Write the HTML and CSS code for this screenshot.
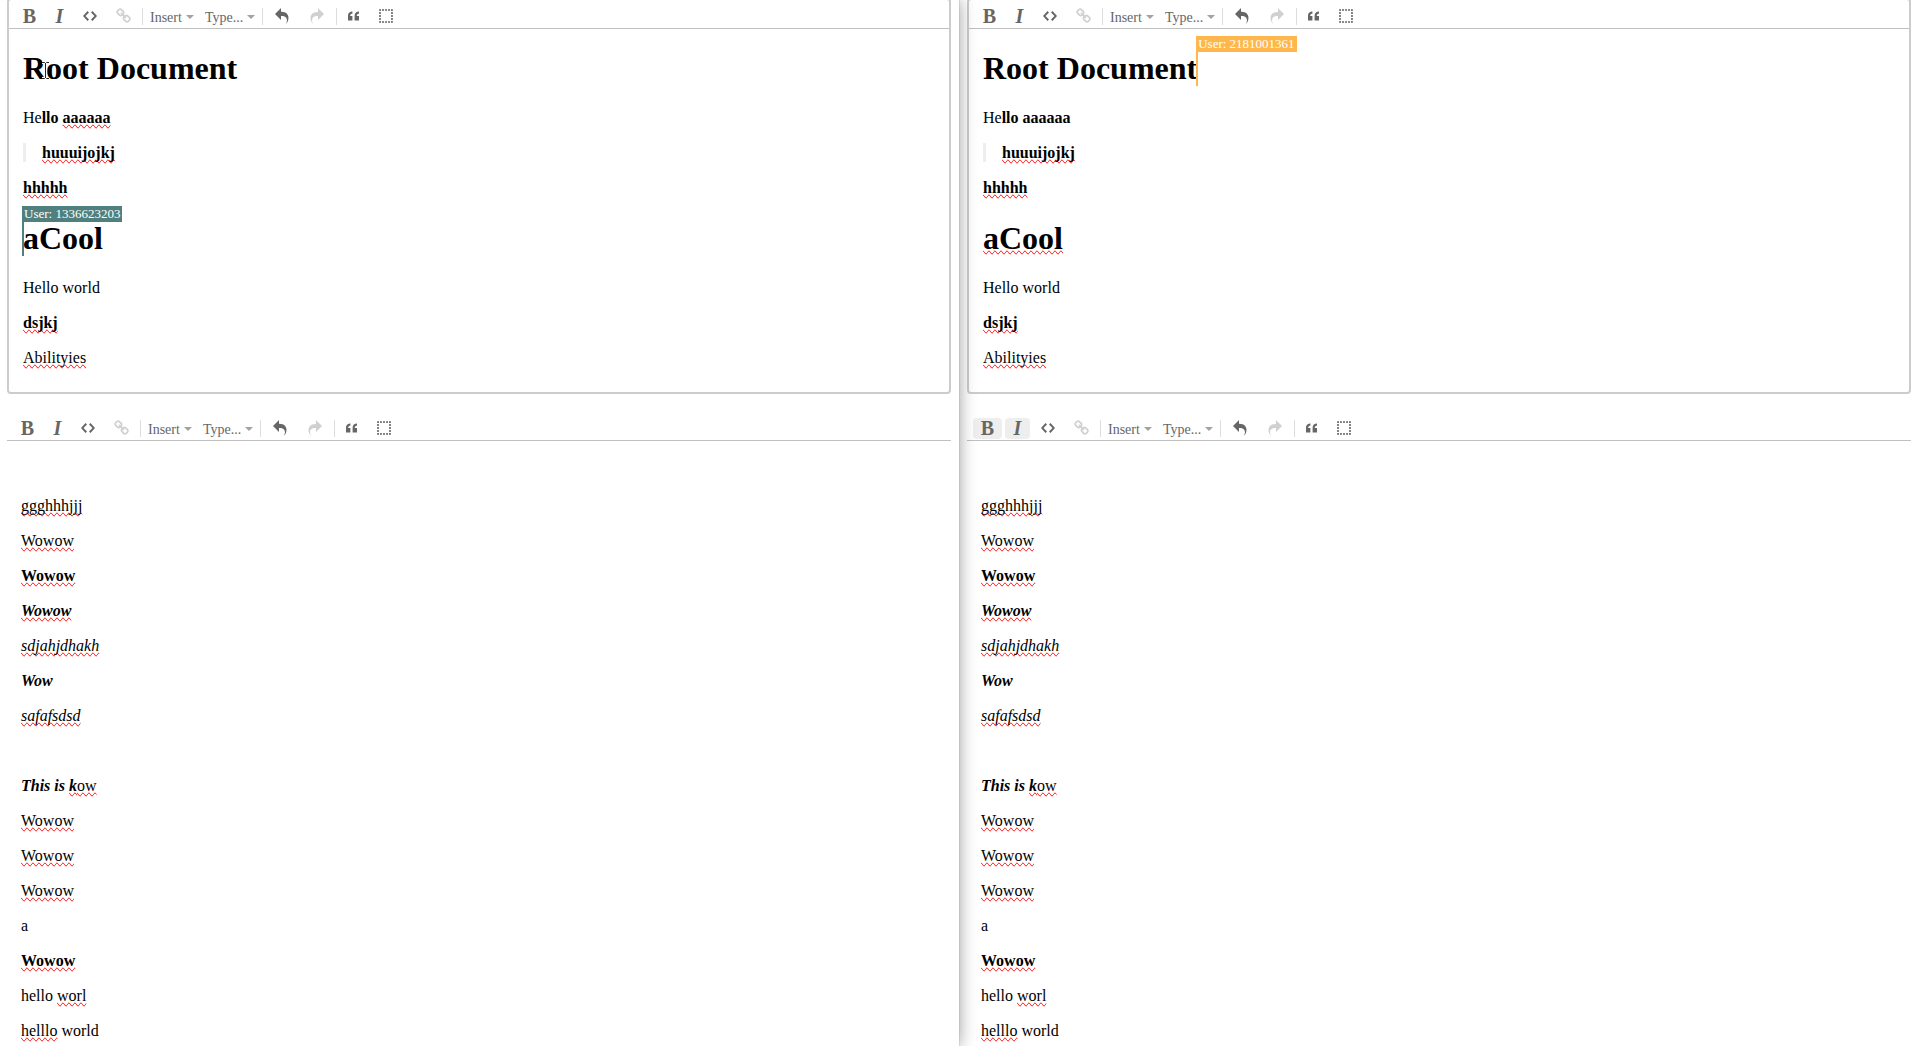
FILE: index.html
```html
<!DOCTYPE html>
<html lang="en">
<head>
<meta charset="utf-8">
<title>Collaborative editor</title>
<link rel="stylesheet" href="styles.css">
</head>
<body>
<svg class="sprite" aria-hidden="true">
  <symbol id="code" viewBox="0 0 896 1024"><path d="M608 192l-96 96 224 224-224 224 96 96 288-320-288-320zM288 192l-288 320 288 320 96-96-224-224 224-224-96-96z"/></symbol>
  <symbol id="link" viewBox="0 0 951 1024"><path d="M832 694q0-22-16-38l-118-118q-16-16-38-16-24 0-41 18 1 1 10 10t12 12 8 10 7 14 2 15q0 22-16 38t-38 16q-8 0-15-2t-14-7-10-8-12-12-10-10q-18 17-18 41 0 22 16 38l117 118q15 15 38 15 22 0 38-14l84-83q16-16 16-38zM430 292q0-22-16-38l-117-118q-16-16-38-16-22 0-38 15l-84 83q-16 16-16 37 0 22 16 38l118 118q15 15 38 15 24 0 41-17-1-1-10-10t-12-12-8-10-7-14-2-15q0-22 16-38t38-16q8 0 15 2t14 7 10 8 12 12 10 10q18-17 18-41zM941 694q0 68-48 116l-84 83q-47 47-116 47-69 0-116-48l-117-118q-47-47-47-116 0-70 50-119l-50-50q-49 50-118 50-68 0-116-48l-118-118q-48-48-48-116t48-116l84-83q47-47 116-47 69 0 116 48l117 118q47 47 47 116 0 70-50 119l50 50q49-50 118-50 68 0 116 48l118 118q48 48 48 116z"/></symbol>
  <symbol id="undo" viewBox="0 0 1024 1024"><path d="M761 1024c113-206 132-520-313-509v253l-384-384 384-384v248c534-13 594 472 313 775z"/></symbol>
  <symbol id="redo" viewBox="0 0 1024 1024"><path d="M576 248v-248l384 384-384 384v-253c-446-10-427 303-313 509-280-303-221-789 313-775z"/></symbol>
  <symbol id="quote" viewBox="0 0 640 896"><path d="M0 448v256h256v-256h-128c0 0 0-128 128-128v-128c0 0-256 0-256 256zM640 320v-128c0 0-256 0-256 256v256h256v-256h-128c0 0 0-128 128-128z"/></symbol>
  <symbol id="parent" viewBox="0 0 15 16"><rect x="2" y="2" width="12" height="12" fill="none" stroke="currentColor" stroke-width="1.600" stroke-dasharray="2 1" stroke-dashoffset="1"/></symbol>
</svg>

<main class="panes">
  <section class="pane pane-left">
    <div class="editor editor-framed">
      <div class="menubar" role="toolbar">
        <button class="item strong" title="Toggle strong style">B</button>
        <button class="item em" title="Toggle emphasis">I</button>
        <button class="item" title="Toggle code font"><svg width="14" height="16"><use href="#code"/></svg></button>
        <button class="item" title="Add or remove link" disabled><svg width="15" height="16"><use href="#link"/></svg></button>
        <span class="separator"></span>
        <button class="dropdown" aria-haspopup="menu">Insert</button>
        <button class="dropdown" aria-haspopup="menu">Type...</button>
        <span class="separator"></span>
        <button class="item" title="Undo last change"><svg width="16" height="16"><use href="#undo"/></svg></button>
        <button class="item" title="Redo last undone change" disabled><svg width="16" height="16"><use href="#redo"/></svg></button>
        <span class="separator"></span>
        <button class="item" title="Wrap in block quote"><svg width="11" height="16"><use href="#quote"/></svg></button>
        <button class="item" title="Select parent node"><svg width="15" height="16"><use href="#parent"/></svg></button>
      </div>
      <div class="doc" contenteditable="true" spellcheck="false">
        <h1>Root Document<svg class="ibeam" width="9" height="19" viewBox="0 0 9 19" aria-hidden="true"><path class="halo" d="M1 1.500h2.500l1 1 1-1H8M4.500 2v15M1 17.500h2.500l1-1 1 1H8"/><path class="beam" d="M1 1.500h2.500l1 1 1-1H8M4.500 2v15M1 17.500h2.500l1-1 1 1H8"/></svg></h1>
        <p>He<strong>llo <span class="typo">aaaaaa</span></strong></p>
        <blockquote><p><strong class="typo">huuuijojkj</strong></p></blockquote>
        <p><strong class="typo">hhhhh</strong></p>
        <h1><span class="caret caret-teal"><span class="user">User: 1336623203</span></span>aCool</h1>
        <p>Hello world</p>
        <p><strong class="typo">dsjkj</strong></p>
        <p><span class="typo">Abilityies</span></p>
      </div>
    </div>

    <div class="editor">
      <div class="menubar" role="toolbar">
        <button class="item strong" title="Toggle strong style">B</button>
        <button class="item em" title="Toggle emphasis">I</button>
        <button class="item" title="Toggle code font"><svg width="14" height="16"><use href="#code"/></svg></button>
        <button class="item" title="Add or remove link" disabled><svg width="15" height="16"><use href="#link"/></svg></button>
        <span class="separator"></span>
        <button class="dropdown" aria-haspopup="menu">Insert</button>
        <button class="dropdown" aria-haspopup="menu">Type...</button>
        <span class="separator"></span>
        <button class="item" title="Undo last change"><svg width="16" height="16"><use href="#undo"/></svg></button>
        <button class="item" title="Redo last undone change" disabled><svg width="16" height="16"><use href="#redo"/></svg></button>
        <span class="separator"></span>
        <button class="item" title="Wrap in block quote"><svg width="11" height="16"><use href="#quote"/></svg></button>
        <button class="item" title="Select parent node"><svg width="15" height="16"><use href="#parent"/></svg></button>
      </div>
      <div class="doc" contenteditable="true" spellcheck="false">
        <p><br></p>
        <p><span class="typo">ggghhhjjj</span></p>
        <p><span class="typo">Wowow</span></p>
        <p><strong class="typo">Wowow</strong></p>
        <p><em><strong class="typo">Wowow</strong></em></p>
        <p><em class="typo">sdjahjdhakh</em></p>
        <p><em><strong>Wow</strong></em></p>
        <p><em class="typo">safafsdsd</em></p>
        <p><br></p>
        <p><em><strong>This is <span class="typo">k</span></strong></em><span class="typo">ow</span></p>
        <p><span class="typo">Wowow</span></p>
        <p><span class="typo">Wowow</span></p>
        <p><span class="typo">Wowow</span></p>
        <p>a</p>
        <p><strong class="typo">Wowow</strong></p>
        <p>hello <span class="typo">worl</span></p>
        <p><span class="typo">helllo</span> world</p>
      </div>
    </div>
  </section>

  <section class="pane pane-right">
    <div class="editor editor-framed">
      <div class="menubar" role="toolbar">
        <button class="item strong" title="Toggle strong style">B</button>
        <button class="item em" title="Toggle emphasis">I</button>
        <button class="item" title="Toggle code font"><svg width="14" height="16"><use href="#code"/></svg></button>
        <button class="item" title="Add or remove link" disabled><svg width="15" height="16"><use href="#link"/></svg></button>
        <span class="separator"></span>
        <button class="dropdown" aria-haspopup="menu">Insert</button>
        <button class="dropdown" aria-haspopup="menu">Type...</button>
        <span class="separator"></span>
        <button class="item" title="Undo last change"><svg width="16" height="16"><use href="#undo"/></svg></button>
        <button class="item" title="Redo last undone change" disabled><svg width="16" height="16"><use href="#redo"/></svg></button>
        <span class="separator"></span>
        <button class="item" title="Wrap in block quote"><svg width="11" height="16"><use href="#quote"/></svg></button>
        <button class="item" title="Select parent node"><svg width="15" height="16"><use href="#parent"/></svg></button>
      </div>
      <div class="doc" contenteditable="true" spellcheck="false">
        <h1>Root Document<span class="caret caret-orange"><span class="user">User: 2181001361</span></span></h1>
        <p>He<strong>llo aaaaaa</strong></p>
        <blockquote><p><strong class="typo">huuuijojkj</strong></p></blockquote>
        <p><strong class="typo">hhhhh</strong></p>
        <h1><span class="typo">aCool</span></h1>
        <p>Hello world</p>
        <p><strong class="typo">dsjkj</strong></p>
        <p><span class="typo">Abilityies</span></p>
      </div>
    </div>

    <div class="editor">
      <div class="menubar" role="toolbar">
        <button class="item strong active" title="Toggle strong style" aria-pressed="true">B</button>
        <button class="item em active" title="Toggle emphasis" aria-pressed="true">I</button>
        <button class="item" title="Toggle code font"><svg width="14" height="16"><use href="#code"/></svg></button>
        <button class="item" title="Add or remove link" disabled><svg width="15" height="16"><use href="#link"/></svg></button>
        <span class="separator"></span>
        <button class="dropdown" aria-haspopup="menu">Insert</button>
        <button class="dropdown" aria-haspopup="menu">Type...</button>
        <span class="separator"></span>
        <button class="item" title="Undo last change"><svg width="16" height="16"><use href="#undo"/></svg></button>
        <button class="item" title="Redo last undone change" disabled><svg width="16" height="16"><use href="#redo"/></svg></button>
        <span class="separator"></span>
        <button class="item" title="Wrap in block quote"><svg width="11" height="16"><use href="#quote"/></svg></button>
        <button class="item" title="Select parent node"><svg width="15" height="16"><use href="#parent"/></svg></button>
      </div>
      <div class="doc" contenteditable="true" spellcheck="false">
        <p><br></p>
        <p><span class="typo">ggghhhjjj</span></p>
        <p><span class="typo">Wowow</span></p>
        <p><strong class="typo">Wowow</strong></p>
        <p><em><strong class="typo">Wowow</strong></em></p>
        <p><em class="typo">sdjahjdhakh</em></p>
        <p><em><strong>Wow</strong></em></p>
        <p><em class="typo">safafsdsd</em></p>
        <p><br></p>
        <p><em><strong>This is <span class="typo">k</span></strong></em><span class="typo">ow</span></p>
        <p><span class="typo">Wowow</span></p>
        <p><span class="typo">Wowow</span></p>
        <p><span class="typo">Wowow</span></p>
        <p>a</p>
        <p><strong class="typo">Wowow</strong></p>
        <p>hello <span class="typo">worl</span></p>
        <p><span class="typo">helllo</span> world</p>
      </div>
    </div>
  </section>
</main>
</body>
</html>
```

FILE: styles.css
```css
* {
  box-sizing: border-box;
}

body {
  margin: 0;
  background: #fff;
  color: #000;
  font: 16px/19px "Liberation Serif", serif;
}

.sprite {
  display: none;
}

.panes {
  display: grid;
  grid-template-columns: minmax(0, 959fr) minmax(0, 955fr);
}

/* Each pane scrolls on its own */
.pane {
  display: flex;
  flex-direction: column;
  gap: 23px;
  height: 100vh;
  overflow: auto;
  scrollbar-width: none;
}

.pane-left {
  position: relative;
  z-index: 1;
  padding: 0 8px 0 7px;
  box-shadow: 0 0 1px #888, 0 0 16px rgba(0, 0, 0, 0.4);
}

.pane-right {
  padding: 0 3px 0 8px;
}

.editor-framed {
  margin-top: -2px;
  padding: 5px 0;
  border: 2px solid #ccc;
  border-radius: 4px;
}

/* Toolbar */
.menubar {
  display: flex;
  gap: 3px;
  height: 24px;
  padding: 1px 6px;
  border-bottom: 1px solid silver;
  color: #666;
}

.item,
.dropdown {
  display: flex;
  align-items: center;
  justify-content: center;
  height: 21px;
  border: 0;
  border-radius: 4px;
  background: none;
  color: inherit;
  font: inherit;
}

.item {
  padding: 2px 8px 3px;
}

.item svg {
  display: block;
  fill: currentColor;
}

.item:disabled {
  opacity: 0.3;
}

.item.active {
  background: #eee;
}

.strong,
.em {
  font-size: 20px;
  font-weight: bold;
}

.strong {
  width: 29px;
}

.em {
  width: 25px;
  font-style: italic;
}

.dropdown {
  gap: 4px;
  padding: 1px 4px 0;
  font-size: 14px;
}

.dropdown::after {
  content: "";
  border: 4px solid transparent;
  border-top-color: currentColor;
  border-bottom: 0;
  opacity: 0.6;
}

.separator {
  width: 1px;
  height: 17px;
  margin-top: 2px;
  background: #ddd;
}

/* Document */
.doc {
  padding: 0 8px 4px 14px;
  outline: none;
}

.doc p {
  margin: 16px 0;
}

.doc h1 {
  position: relative;
  margin: 21px 0;
  font-size: 32px;
  line-height: 37px;
}

.doc p + h1 {
  margin-top: 23px;
}

.doc > p:first-child {
  margin-top: 20px;
}

.doc blockquote {
  margin: 16px 0;
  padding-left: 16px;
  border-left: 3px solid #eee;
}

.doc blockquote p {
  margin: 0;
}

.typo {
  text-decoration: spelling-error;
}

/* Remote carets */
.caret {
  position: absolute;
  top: -14px;
  height: 50px;
  margin-left: -1px;
  border-left: 2px solid;
}

.caret-teal {
  border-color: #50807d;
  background: #50807d;
}

.caret-orange {
  border-color: #ffb74b;
  background: #ffb74b;
}

.user {
  position: absolute;
  top: 0;
  left: -2px;
  padding: 0 2px;
  background: inherit;
  color: #fff;
  font-size: 13px;
  font-weight: normal;
  line-height: 16px;
  white-space: nowrap;
}

.ibeam {
  position: absolute;
  top: 11px;
  left: 18px;
  fill: none;
}

.halo {
  stroke: #fff;
  stroke-width: 3px;
}

.beam {
  stroke: #222;
  stroke-width: 1px;
}
```
